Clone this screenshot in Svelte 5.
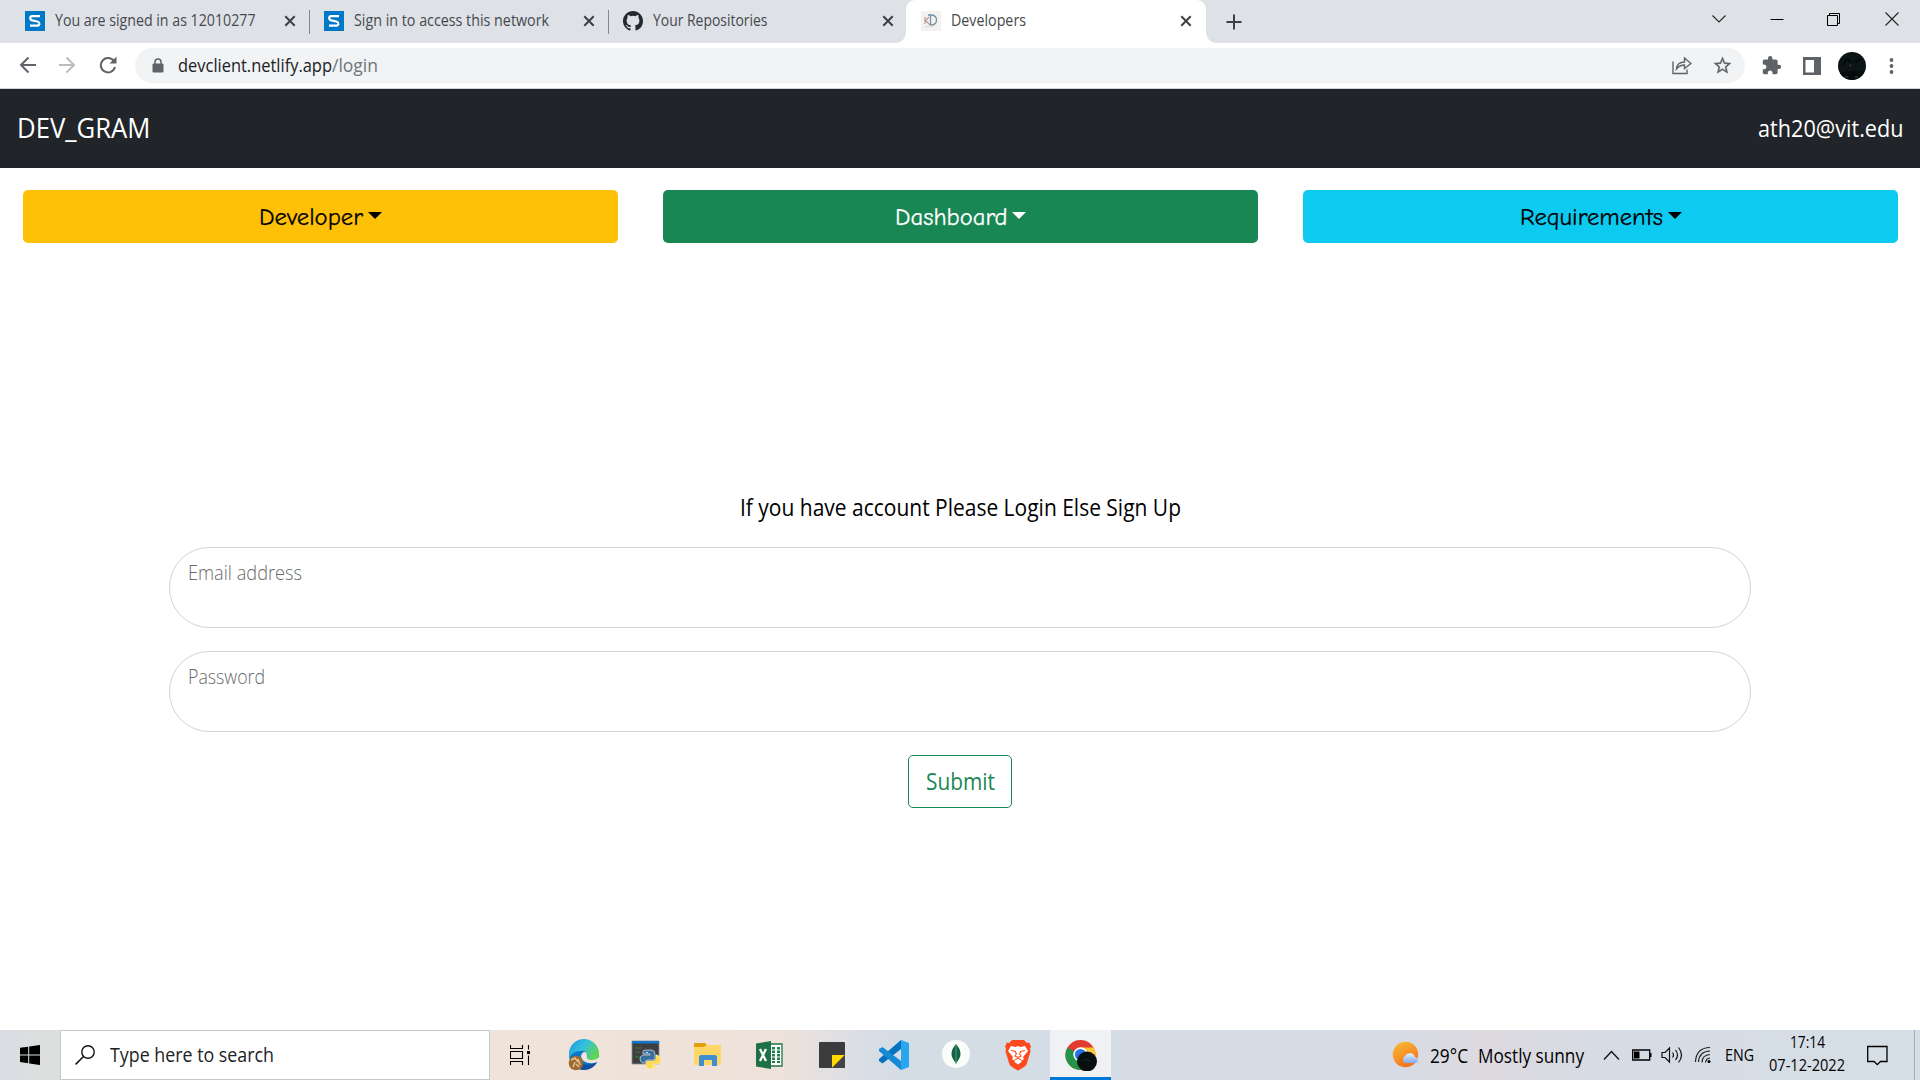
<script>
  // Stretches a label horizontally so that it takes exactly the given advance.
  function fit(node, width) {
    const natural = node.getBoundingClientRect().width;
    node.style.transform = `scaleX(${width / natural})`;
    node.style.marginRight = `${width - natural}px`;
  }

  const tabs = [
    { title: 'You are signed in as 12010277', width: 200.5, icon: 'sophos' },
    { title: 'Sign in to access this network', width: 195, icon: 'sophos' },
    { title: 'Your Repositories', width: 114.5, icon: 'github' },
    { title: 'Developers', width: 75, icon: 'site', active: true }
  ];
  const menus = [
    { label: 'Developer', width: 104, tone: 'warning' },
    { label: 'Dashboard', width: 112.5, tone: 'success' },
    { label: 'Requirements', width: 143, tone: 'info' }
  ];
  const fields = [
    { label: 'Email address', width: 114 },
    { label: 'Password', width: 77 }
  ];
  const apps = ['edge', 'python', 'files', 'excel', 'notes', 'code', 'mongo', 'brave', 'chrome'];
</script>

<div class="screen">
  <div class="tabstrip">
    {#each tabs as tab}
      <div class="tab" class:active={tab.active}>
        {#if tab.icon === 'sophos'}
          <svg class="fav" width="20" height="20" viewBox="0 0 20 20"><rect width="20" height="20" fill="#0078c8" /><path d="M15 5.100H7.200Q5.200 5.100 5.200 7t2 2.400l5.200 1.100q2 .5 2 2.200t-2 1.900H5" fill="none" stroke="#fff" stroke-width="2.100" /></svg>
        {:else if tab.icon === 'github'}
          <svg class="fav" width="20" height="20" viewBox="0 0 16 16"><path fill="#24292f" d="M8 0C3.58 0 0 3.58 0 8c0 3.54 2.29 6.53 5.47 7.59.4.07.55-.17.55-.38 0-.19-.01-.82-.01-1.49-2.01.37-2.53-.49-2.69-.94-.09-.23-.48-.94-.82-1.13-.28-.15-.68-.52-.01-.53.63-.01 1.08.58 1.23.82.72 1.21 1.87.87 2.33.66.07-.52.28-.87.51-1.07-1.78-.2-3.64-.89-3.64-3.95 0-.87.31-1.59.82-2.15-.08-.2-.36-1.02.08-2.12 0 0 .67-.21 2.2.82a7.6 7.6 0 0 1 4 0c1.53-1.04 2.2-.82 2.2-.82.44 1.1.16 1.92.08 2.12.51.56.82 1.27.82 2.15 0 3.07-1.87 3.75-3.65 3.95.29.25.54.73.54 1.48 0 1.07-.01 1.93-.01 2.2 0 .21.15.46.55.38A8.01 8.01 0 0 0 16 8c0-4.42-3.58-8-8-8z" /></svg>
        {:else}
          <svg class="fav" width="20" height="20" viewBox="0 0 20 20"><rect width="20" height="20" fill="#f4f2ef" /><path d="M4 6v7M8 6L4.500 9.500L9 14" fill="none" stroke="#b8938b" stroke-width="1.100" /><path d="M7 4h3.500q5 .5 5 5t-5 5.200L9.500 13V4" fill="none" stroke="#6d93a2" stroke-width="1.300" /><path d="M4 15.500h9" stroke="#ddd" /></svg>
        {/if}
        <span class="tabname"><span class="fit" use:fit={tab.width}>{tab.title}</span></span>
        <svg class="x" width="12" height="12" viewBox="0 0 12 12"><path d="M1.300 1.300L10.700 10.700M10.700 1.300L1.300 10.700" stroke="#3c4043" stroke-width="2" /></svg>
      </div>
    {/each}
    <svg class="plus" width="16" height="16" viewBox="0 0 16 16"><path d="M8 .5v15M.5 8h15" stroke="#3c4043" stroke-width="2" /></svg>
    <div class="winctl">
      <svg width="14" height="14" viewBox="0 0 14 14"><path d="M.5 3.500L7 10L13.500 3.500" fill="none" stroke="#222" stroke-width="1.100" /></svg>
      <svg width="14" height="14" viewBox="0 0 14 14"><path d="M.5 7.500h13" stroke="#000" /></svg>
      <svg width="14" height="14" viewBox="0 0 14 14"><path d="M.5 3.500h10v10h-10zM2.500 3V1.500h10v10H11" fill="none" stroke="#000" /></svg>
      <svg width="14" height="14" viewBox="0 0 14 14"><path d="M.5 .5l13 13M13.500 .5l-13 13" stroke="#222" stroke-width="1.100" /></svg>
    </div>
  </div>

  <div class="toolbar">
    <svg class="back" width="18" height="18" viewBox="0 0 18 18"><path d="M17 9H2.500M9.500 1.500L2 9l7.500 7.500" fill="none" stroke="#5f6368" stroke-width="2" /></svg>
    <svg class="fwd" width="18" height="18" viewBox="0 0 18 18"><path d="M1 9h14.500M8.500 1.500L16 9l-7.500 7.500" fill="none" stroke="#babcbe" stroke-width="2" /></svg>
    <svg class="reload" width="18" height="18" viewBox="0 0 18 18"><path d="M15.200 5.500A7.200 7.200 0 1 0 16 11" fill="none" stroke="#5f6368" stroke-width="2" /><path d="M17.500 .5v7h-7z" fill="#5f6368" /></svg>
    <div class="omnibox">
      <svg class="lock" width="12" height="15" viewBox="0 0 12 15"><path d="M3 6V4a3 3 0 0 1 6 0v2" fill="none" stroke="#5f6368" stroke-width="1.500" /><rect x=".5" y="5.500" width="11" height="9" rx="1.300" fill="#5f6368" /></svg>
      <span class="fit url" use:fit={154}>devclient.netlify.app</span><span class="fit url path" use:fit={46}>/login</span>
      <svg class="share" width="20" height="19" viewBox="0 0 20 19"><path d="M1 5.500v12h14V13.500" fill="none" stroke="#5f6368" stroke-width="1.400" /><path d="M4.500 13c.5-5 4-7 8-7V2l6.500 5.500l-6.500 5V9c-4 0-6 1.500-8 4z" fill="none" stroke="#5f6368" stroke-width="1.400" /></svg>
      <svg class="star" width="21" height="21" viewBox="0 0 24 24"><path fill="#5f6368" d="M22 9.240l-7.190-.62L12 2 9.190 8.630 2 9.240l5.460 4.730L5.820 21 12 17.270 18.180 21l-1.630-7.030L22 9.240zM12 15.400l-3.760 2.270 1-4.280-3.320-2.880 4.380-.38L12 6.100l1.710 4.040 4.380.38-3.320 2.880 1 4.280L12 15.400z" stroke="#5f6368" stroke-width=".3" /></svg>
    </div>
    <svg class="puzzle" width="21" height="21" viewBox="0 0 24 24"><path fill="#5f6368" d="M20.500 11H19V7c0-1.100-.9-2-2-2h-4V3.500a2.500 2.500 0 0 0-5 0V5H4c-1.100 0-1.990.9-1.990 2v3.800H3.500c1.490 0 2.700 1.210 2.700 2.700s-1.210 2.700-2.700 2.700H2V20c0 1.100.9 2 2 2h3.800v-1.500c0-1.490 1.210-2.700 2.700-2.700s2.700 1.210 2.700 2.700V22H17c1.100 0 2-.9 2-2v-4h1.500a2.500 2.500 0 0 0 0-5z" /></svg>
    <svg class="panel" width="18" height="18" viewBox="0 0 18 18"><path fill="#5f6368" fill-rule="evenodd" d="M0 0h18v18H0zM2.500 3v12.500H11V3z" /></svg>
    <svg class="avatar" width="28" height="28" viewBox="0 0 28 28"><circle cx="14" cy="14" r="14" fill="#0c1515" /><path d="M2 21q12-4 24-1q-4 7-12 8Q5 27 2 21z" fill="#050a0b" /><path d="M5 13l4-6 4 3M17 10l6-3" stroke="#020505" stroke-width="1.500" fill="none" /><circle cx="12.500" cy="13.500" r="1" fill="#5e3a22" /><path d="M6 25h4M17 25h3" stroke="#4a5555" stroke-width=".8" /></svg>
    <svg class="dots" width="5" height="18" viewBox="0 0 5 18"><g fill="#5f6368"><circle cx="2.500" cy="3" r="1.900" /><circle cx="2.500" cy="9" r="1.900" /><circle cx="2.500" cy="15" r="1.900" /></g></svg>
  </div>

  <header class="navbar">
    <span class="fit brand" use:fit={133.5}>DEV_GRAM</span>
    <span class="fit user" use:fit={145.5}>ath20@vit.edu</span>
  </header>

  <nav class="menus">
    {#each menus as menu}
      <button class="menu {menu.tone}"><span class="fit" use:fit={menu.width}>{menu.label}</span><i class="caret"></i></button>
    {/each}
  </nav>

  <main>
    <div class="hint"><span class="fit" use:fit={441}>If you have account Please Login Else Sign Up</span></div>
    {#each fields as field}
      <div class="field"><span class="fit" use:fit={field.width}>{field.label}</span></div>
    {/each}
    <button class="submit"><span class="fit" use:fit={69}>Submit</span></button>
  </main>

  <footer class="taskbar">
    <div class="start"><svg width="20" height="20" viewBox="0 0 20 20"><path d="M0 2.800L8.200 1.700V9.400H0zM9.200 1.500L20 0v9.400H9.200zM0 10.400h8.200v7.800L0 17zM9.200 10.400H20V20L9.200 18.400z" /></svg></div>
    <div class="search">
      <svg width="20" height="20" viewBox="0 0 20 20"><circle cx="13" cy="7" r="6.200" fill="none" stroke="#111" stroke-width="1.400" /><path d="M8.500 11.500L.6 19.400" stroke="#111" stroke-width="1.500" /></svg>
      <span class="fit" use:fit={164}>Type here to search</span>
    </div>
    <div class="taskview"><svg width="20" height="20" viewBox="0 0 20 20"><path d="M.5 0v3.500h12V0M.5 20v-3.500h12V20M.5 6.500h12v7H.5zM18.500 0v4.500M18.500 10.500V20" fill="none" stroke="#000" stroke-width="1.100" /><path d="M17 6h3v3h-3z" /></svg></div>
    {#each apps as app}
      <div class="app {app}">
        <svg width="32" height="32" viewBox="0 0 32 32">
          {#if app === 'edge'}
            <defs><linearGradient id="edgeTop" x1="0" y1="0" x2="1" y2=".6"><stop stop-color="#1b92dd" /><stop offset=".5" stop-color="#33c1dc" /><stop offset="1" stop-color="#62d64d" /></linearGradient></defs>
            <circle cx="16" cy="16" r="15" fill="#0c76c8" />
            <path d="M1 16A15 15 0 0 1 31 14c.5 5-3 8-8 8-3 0-5-1-4-3 2-5-3-8-7-7-5 0-9 3-11 7z" fill="url(#edgeTop)" />
            <path d="M11 17c-1 7 6 12 18 6-4 8-14 10-20 6z" fill="#114f9c" />
            <path d="M13 17c1-5 6-5 6-1s0 5 5 5c3 0 5-1 8-4v6h-3c-7 3-16 0-16-6z" fill="#efe4dd" />
            <circle cx="8" cy="24" r="7.300" fill="#9c6a32" /><path d="M3 21l4-2 3 4M5 28l2-5M10 20l2 6M8 25l3 3" stroke="#e5c08a" stroke-width="1.500" fill="none" />
          {:else if app === 'python'}
            <path d="M2 2h27v23H2z" fill="#3f3f41" stroke="#8a8f94" stroke-width=".8" /><path d="M2 2h27v2.500H2z" fill="#1177cf" />
            <path d="M5 9h7M5 13h5M5 18h8" stroke="#37812f" stroke-width="1.200" />
            <path d="M15 11h6q4 0 4 4v4q0 2-2 2h-5q-3 0-3 3h-2q-3-1-3-4t3-4h7v-1h-7v-2q0-2 2-2z" fill="#366f9f" stroke="#dbe2e8" stroke-width=".7" />
            <path d="M26 16h1q4 1 4 5t-4 4h-5v1h4v1q-1 3-5 3t-5-3v-3q0-2 2-2h5q3 0 3-3z" fill="#ffd94b" stroke="#f7eecb" stroke-width=".7" />
            <circle cx="17" cy="13.500" r=".8" fill="#fff" /><circle cx="23" cy="28" r=".8" fill="#fff" />
          {:else if app === 'files'}
            <path d="M2 5q0-1 1-1h10l2 2-2 3H2z" fill="#e0a00a" /><path d="M2 8h10l3-2h13q1 0 1 1v18q0 1-1 1H3q-1 0-1-1z" fill="#ffd766" />
            <path d="M7 27V18q0-2 2-2h14q2 0 2 2v9h-5v-6h-8v6z" fill="#3f8fd0" />
          {:else if app === 'excel'}
            <path d="M14 5h14v22H14z" fill="#fff" stroke="#217346" stroke-width="1.300" /><path d="M18 8h3v16h-3zM23 8h3v16h-3z" fill="#21804d" /><path d="M17 11h10M17 14.500h10M17 18h10M17 21.500h10" stroke="#fff" />
            <path d="M2 4.500L17 2v28L2 27.500z" fill="#1e7145" /><path d="M6 10l6 12M12 10L6 22" stroke="#fff" stroke-width="2.300" />
          {:else if app === 'notes'}
            <rect x="3" y="3" width="26" height="26" rx="1" fill="#3c3c3e" /><path d="M16 16h13L16 29z" fill="#ffd900" /><path d="M29 16v13H16z" fill="#444446" />
          {:else if app === 'code'}
            <path d="M23 1v9L4.500 24.500 1 22V20z" fill="#0871bd" /><path d="M23 31v-9L4.500 8 1 10v2z" fill="#168ad4" /><path d="M23 1l8 3v24l-8 3z" fill="#29a6ee" />
          {:else if app === 'mongo'}
            <circle cx="16" cy="15" r="14" fill="#fafcfa" /><path d="M16 5q9 10 0 19q-9-9 0-19z" fill="#116149" /><path d="M16 6v19" stroke="#4aa46a" />
          {:else if app === 'brave'}
            <path d="M10 1h12l3 3 2-.5 2 4-1 2 .5 3-4 13q-1 2-8.500 6-7.500-4-8.500-6l-4-13L4 9.500 3 7.500l2-4L7 4z" fill="#fb4a1e" />
            <path d="M9 7l4.500 1 2.500-1 2.500 1L23 7l3 5-5 6 1 2.500-3.500 1 1.500 1-4 3-4-3 1.500-1-3.500-1L11 18l-5-6z" fill="#fff" /><path d="M9 11.500l4.500 1 .8 2.500-1.300 2 3 1.500 3-1.500-1.300-2 .8-2.500 4.500-1M13 20.500l3-1 3 1" fill="none" stroke="#fb4a1e" stroke-width="1.100" />
          {:else}
            <circle cx="15.500" cy="16" r="15" fill="#e33b2e" /><path d="M15.500 16L2.500 8.500A15 15 0 0 0 15.500 31L22 20z" fill="#249548" /><path d="M15.500 8.500h13A15 15 0 0 1 15.500 31L22 19.500z" fill="#fcc934" />
            <circle cx="15.500" cy="15.500" r="7.200" fill="#fff" /><circle cx="15.500" cy="15.500" r="5.600" fill="#2372e8" /><circle cx="22" cy="22.500" r="10" fill="#070f0f" /><path d="M18 22l3-2 4 2" stroke="#1c2928" fill="none" />
          {/if}
        </svg>
      </div>
    {/each}
    <div class="tray">
      <svg class="sun" width="28" height="28" viewBox="0 0 28 28"><defs><linearGradient id="sun" x1="0" y1="0" x2=".5" y2="1"><stop stop-color="#f8bf35" /><stop offset="1" stop-color="#f5741e" /></linearGradient><linearGradient id="cloud" x1="0" y1="0" x2="0" y2="1"><stop stop-color="#e5f0ff" /><stop offset="1" stop-color="#83aaf2" /></linearGradient></defs><circle cx="13.500" cy="13.500" r="12.700" fill="url(#sun)" /><path d="M13 22a4 4 0 0 1 0-7 5.500 5.500 0 0 1 10 1 3.200 3.200 0 0 1 1 6z" fill="url(#cloud)" /></svg>
      <span class="fit temp" use:fit={38}>29°C</span>
      <span class="fit weather" use:fit={106}>Mostly sunny</span>
      <svg class="up" width="17" height="11" viewBox="0 0 17 11"><path d="M1 9.500L8.500 1.500L16 9.500" fill="none" stroke="#111" stroke-width="1.300" /></svg>
      <svg class="battery" width="20" height="12" viewBox="0 0 20 12"><path d="M.7 1h17v10H.7z" fill="none" stroke="#000" stroke-width="1.300" /><path d="M2 2.500h5.500v7H2zM18 4h1.500v4H18z" /></svg>
      <svg class="volume" width="22" height="18" viewBox="0 0 22 18"><path d="M1 6.500h3L8.500 2v14L4 11.500H1zM11.500 6.500q2 2.500 0 5M14.500 4q4 5 0 10M17.500 1.500q6 7.500 0 15" fill="none" stroke="#111" stroke-width="1.200" /></svg>
      <svg class="wifi" width="18" height="18" viewBox="0 0 18 18"><path d="M1.500 16Q2 2 16 1.500M4.500 16Q5 5.500 16 5M8 16.500Q8 9 16 8.500M11.500 16.500q.5-4 4.500-4.500" fill="none" stroke="#222" stroke-width="1.200" /><circle cx="15" cy="15.500" r="1.500" /></svg>
      <span class="fit lang" use:fit={29}>ENG</span>
      <div class="clock"><div><span class="fit" use:fit={35}>17:14</span></div><div><span class="fit" use:fit={76}>07-12-2022</span></div></div>
      <svg class="notice" width="21" height="21" viewBox="0 0 21 21"><path d="M.7 1.500h19.300v15h-6.500l-3.200 3.200-3.200-3.200H.7z" fill="none" stroke="#000" stroke-width="1.300" /></svg>
      <div class="desktop"></div>
    </div>
  </footer>
</div>

<style>
  :global(body) { margin: 0; background: #fff; }
  .screen { width: 1920px; height: 1080px; display: flex; flex-direction: column; overflow: hidden; background: #fff; font-family: "Open Sans", "Noto Sans", sans-serif; box-sizing: border-box; }
  .screen * { box-sizing: border-box; }
  svg { display: block; flex: none; }
  .fit { display: inline-block; white-space: nowrap; transform-origin: 0 50%; flex: none; }
  button { font-family: inherit; margin: 0; padding: 0; }

  .tabstrip { height: 43px; flex: none; background: #dee1e6; display: flex; align-items: center; padding-left: 10px; }
  .tab { width: 299px; height: 43px; display: flex; align-items: center; padding: 0 13px 1px 15px; position: relative; flex: none; font-size: 15.500px; line-height: 39px; color: #45494d; }
  .tab:nth-child(-n+2)::after { content: ""; position: absolute; right: -1px; top: 10px; width: 1px; height: 24px; background: #85898e; }
  .tab:nth-child(3) { padding-right: 13.500px; }
  .tab.active { width: 300px; margin-left: -1px; background: #fff; border-radius: 9px 9px 0 0; padding-right: 14.500px; }
  .tab.active::before, .tab.active::after { content: ""; position: absolute; bottom: 0; width: 10px; height: 10px; }
  .tab.active::before { left: -10px; background: radial-gradient(circle at 0 0, #dee1e6 9.500px, #fff 10px); }
  .tab.active::after { right: -10px; background: radial-gradient(circle at 100% 0, #dee1e6 9.500px, #fff 10px); }
  .tabname { flex: 1; height: 41px; margin-left: 10px; }
  .plus { margin-left: 20px; }
  .winctl { margin-left: auto; display: flex; gap: 43.400px; padding: 0 21.500px 6px 0; }

  .toolbar { height: 46px; flex: none; display: flex; align-items: center; border-bottom: 1px solid #d2d4d7; padding-left: 19px; }
  .back, .fwd, .reload { margin-bottom: 1px; }
  .fwd { margin-left: 21px; }
  .reload { margin-left: 22.500px; }
  .omnibox { width: 1610px; height: 35px; margin-left: 18px; border-radius: 18px; background: #f1f3f4; display: flex; align-items: center; padding: 0 12px 0 17px; }
  .lock { margin-right: 14px; }
  .url { font-size: 17.500px; line-height: 35px; color: #202124; }
  .path { color: #70757a; }
  .share { margin-left: auto; margin-right: 20px; }
  .puzzle { margin-left: 16px; }
  .panel { margin-left: 21px; }
  .avatar { margin-left: 17px; }
  .dots { margin-left: 23px; }

  .navbar { height: 79px; flex: none; background: #212529; color: #fff; display: flex; align-items: center; justify-content: space-between; padding: 0 16.500px 0 16.500px; }
  .brand { font-size: 28px; line-height: 75px; padding-bottom: 2px; }
  .user { font-size: 23px; font-weight: 500; line-height: 79px; }

  .menus { display: grid; grid-template-columns: repeat(3, 595px); gap: 45px; padding: 22px 0 0 23px; flex: none; }
  .menu { height: 53px; border: 0; border-radius: 5px; display: flex; align-items: center; justify-content: center; font: 24px/50px "Comic Neue", "Comic Sans MS", "Open Sans", sans-serif; color: #000; -webkit-text-stroke: .25px currentColor; }
  .warning { background: #ffc107; }
  .success { background: #198754; color: #fff; }
  .info { background: #0dcaf0; }
  .caret { margin: -2px 0 0 5px; border: 7px solid transparent; border-top-color: currentColor; border-bottom: 0; }

  main { flex: 1; display: flex; flex-direction: column; align-items: center; padding-top: 246px; }
  .hint { height: 36px; margin-bottom: 22px; font-size: 23.500px; line-height: 37px; color: #000; }
  .field { width: 1582px; height: 81px; margin-bottom: 23px; border: 1px solid #ced4da; border-radius: 40px; padding: 9px 17.500px; font-size: 20.500px; font-weight: 350; line-height: 31px; color: #666a6d; }
  .submit { width: 104px; height: 53px; border: 1px solid #198754; border-radius: 5px; background: #fff; color: #198754; font-size: 23.500px; line-height: 48px; padding-bottom: 2px; }

  .taskbar { height: 50px; flex: none; display: flex; background: linear-gradient(90deg, #d9dee3 0, #dddfdd 60px, #f0e3da 490px, #eee2da 780px, #dcdfe4 850px, #d4dce6 900px, #d6dce6 1380px, #ddd9df 1480px, #d6dce5 1620px, #d5dee5 1920px); color: #000; }
  .start { width: 60px; display: flex; align-items: center; justify-content: center; }
  .search { width: 430px; background: #fff; border: 1px solid #c5c7c9; display: flex; align-items: center; padding-left: 14px; font-size: 19.500px; line-height: 46px; color: #222; }
  .search svg { margin-right: 15px; }
  .taskview { width: 62px; display: flex; align-items: center; padding-left: 20px; }
  .app { width: 62px; display: flex; align-items: center; justify-content: center; margin-left: 0; }
  .edge { margin-left: 1px; }
  .chrome { width: 61px; margin-left: 1px; background: #eff1f4; box-shadow: inset 0 -3px #0078d7; }
  .tray { flex: 1; display: flex; align-items: center; padding-left: 281px; }
  .temp { font-size: 19.500px; line-height: 50px; margin-left: 10px; padding-top: 1px; }
  .weather { font-size: 19.500px; line-height: 50px; margin-left: 10px; padding-top: 1px; }
  .up { margin-left: 19px; }
  .battery { margin-left: 12px; }
  .volume { margin-left: 9px; }
  .wifi { margin-left: 11px; }
  .lang { font-size: 16px; line-height: 50px; margin-left: 12.500px; }
  .clock { width: 78px; margin-left: 14.500px; font-size: 15.500px; line-height: 23px; display: flex; flex-direction: column; align-items: center; padding-bottom: 2px; }
  .notice { margin-left: 21px; }
  .desktop { height: 50px; margin-left: auto; width: 6px; border-left: 1px solid #a2abb5; }
</style>
